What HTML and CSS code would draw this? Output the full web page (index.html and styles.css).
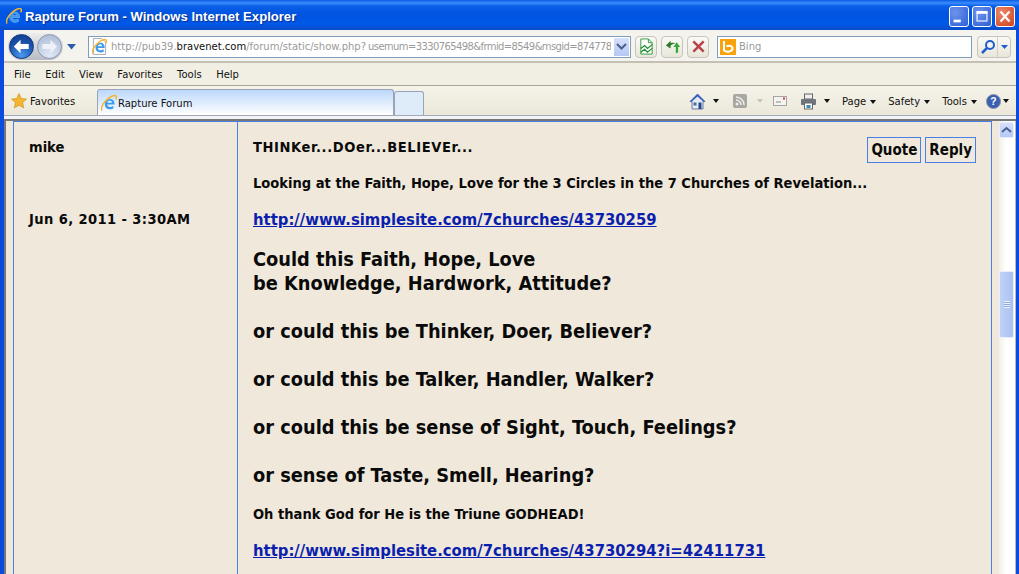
FILE: index.html
```html
<!DOCTYPE html>
<html lang="en">
<head>
<meta charset="utf-8">
<title>Rapture Forum - Windows Internet Explorer</title>
<link rel="stylesheet" href="styles.css">
</head>
<body>
<div class="window">
  <header class="titlebar">
    <svg class="ie ie-title" viewBox="0 0 16 16"><use href="#ie"/></svg>
    <span class="title-text">Rapture Forum - Windows Internet Explorer</span>
    <div class="winbtns">
      <span class="winbtn"><svg viewBox="0 0 20 21"><rect x="4" y="14" width="8" height="3" fill="#fff"/></svg></span>
      <span class="winbtn"><svg viewBox="0 0 20 21"><rect x="4.500" y="5.500" width="11" height="10" fill="none" stroke="#fff" stroke-width="1.200"/><rect x="4" y="4.500" width="12" height="3" fill="#fff"/></svg></span>
      <span class="winbtn winbtn-close"><svg viewBox="0 0 20 21"><path d="M5 5l10 11M15 5L5 16" stroke="#fff" stroke-width="2.400"/></svg></span>
    </div>
  </header>

  <div class="client">
    <div class="navbar">
      <div class="navpill">
        <span class="round round-back"><svg viewBox="0 0 24 24"><path d="M4 12l7-7v4.500h8.500v5H11V19z" fill="#fff"/></svg></span>
        <span class="round round-fwd"><svg viewBox="0 0 24 24"><path d="M20 12l-7-7v4.500H4.500v5H13V19z" fill="#eef2f8"/></svg></span>
      </div>
      <svg class="navdrop" viewBox="0 0 9 6"><path d="M0 0h9L4.500 5.500z" fill="#2a5ea8"/></svg>
      <div class="addr">
        <svg class="addr-ico" viewBox="0 0 16 18"><path d="M1.500.5h9l4 4v13h-13z" fill="#fff" stroke="#a8a8b4"/><g transform="translate(0 1)"><use href="#ie"/></g></svg>
        <span class="addr-url">http://pub39.<b>bravenet.com</b>/forum/static/show.php?<span class="addr-query">usernum=3330765498&amp;frmid=8549&amp;msgid=874778</span></span>
        <span class="addr-drop"><svg viewBox="0 0 11 8"><path d="M1 1l4.500 4.500L10 1" fill="none" stroke="#4a5f8a" stroke-width="2"/></svg></span>
      </div>
      <span class="navbtn"><svg viewBox="0 0 16 18"><path d="M2 1h8l4 4v12H2z" fill="#fff" stroke="#2c9a3a"/><path d="M10 1v4h4" fill="none" stroke="#2c9a3a"/><path d="M2 11l4-3 3 3 5-4M2 15l4-3 3 3 5-4" fill="none" stroke="#1f8a30" stroke-width="1.300"/></svg></span>
      <span class="navbtn"><svg viewBox="0 0 18 18"><path d="M2 8l5-5v2.500c2-.8 4-.5 5 .7-1.500-.2-3.500.3-5 1.800V11z" fill="#2a7a2a"/><path d="M13.500 4.500L17 9.500h-2V15l-2.500 1.500V9.500H10z" fill="#35a83a"/></svg></span>
      <span class="navbtn"><svg viewBox="0 0 18 18"><path d="M3.500 3.500l11 11M14.500 3.500l-11 11" stroke="#b8404a" stroke-width="2.600"/></svg></span>
      <div class="search">
        <span class="bing"><svg viewBox="0 0 16 16"><path d="M4 2v9.500c3 2.200 8.500 1 8.500-2 0-2.800-4-3.500-6-2" fill="none" stroke="#fff" stroke-width="2"/></svg></span>
        <span class="search-text">Bing</span>
      </div>
      <div class="searchbtn">
        <span class="searchbtn-go"><svg viewBox="0 0 16 16"><circle cx="10" cy="6" r="4" fill="none" stroke="#1d5fd0" stroke-width="2"/><path d="M7 9l-5 5" stroke="#1d5fd0" stroke-width="2.500"/></svg></span>
        <span class="searchbtn-drop"><svg viewBox="0 0 7 4"><path d="M0 0h7L3.500 4z" fill="#1d5fd0"/></svg></span>
      </div>
    </div>

    <nav class="menubar">
      <span>File</span><span>Edit</span><span>View</span><span>Favorites</span><span>Tools</span><span>Help</span>
    </nav>

    <div class="tabbar">
      <div class="tabrow">
        <div class="favs">
          <svg class="star" viewBox="0 0 16 16"><path d="M8 .5l2.300 5 5.200.6-3.900 3.500 1.100 5.400L8 12.300 3.300 15l1.100-5.400L.5 6.100l5.200-.6z" fill="#f5b62e" stroke="#c98a1a" stroke-width=".6"/></svg>
          <span>Favorites</span>
        </div>
        <div class="tab tab-active">
          <svg class="ie" viewBox="0 0 16 16"><use href="#ie"/></svg>
          <span>Rapture Forum</span>
        </div>
        <div class="tab tab-new"></div>
        <div class="cmds">
          <span class="cmd cmd-home"><svg viewBox="0 0 17 17"><path d="M8.500 1L1 8.500h2V16h11V8.500h2z" fill="#e4ebf3" stroke="#4a6090" stroke-width=".8"/><path d="M8.500 1L1 8.500h2L8.500 3.500 14 8.500h2z" fill="#2f5fc0"/><rect x="9.500" y="9.500" width="3" height="6.500" fill="#1f4a90"/><rect x="4.500" y="9.500" width="3" height="3" fill="#4a6a9a"/></svg><i class="caret"></i></span>
          <span class="cmd cmd-rss"><svg viewBox="0 0 14 14"><rect width="14" height="14" rx="2" fill="#a9a79f"/><circle cx="4" cy="10" r="1.500" fill="#eee"/><path d="M3 6a5 5 0 0 1 5 5M3 3a8 8 0 0 1 8 8" fill="none" stroke="#eee" stroke-width="1.500"/></svg><i class="caret caret-dim"></i></span>
          <span class="cmd cmd-mail"><svg viewBox="0 0 14 10"><rect x=".5" y=".5" width="13" height="9" fill="#f4f4f2" stroke="#a5a5a5"/><path d="M3 6h5" stroke="#888"/><rect x="10" y="1.500" width="2" height="2" fill="#d33"/></svg></span>
          <span class="cmd cmd-print"><svg viewBox="0 0 17 17"><rect x="4.500" y="1" width="8" height="5" fill="#f0f0f0" stroke="#666"/><rect x="1" y="6" width="15" height="6" rx="1" fill="#6f747c"/><rect x="4.500" y="10" width="8" height="6" fill="#fff" stroke="#666"/><rect x="6.500" y="12" width="4" height="3" fill="#3a8ab0"/></svg><i class="caret"></i></span>
          <span class="cmd-text cmd-page">Page<i class="caret"></i></span>
          <span class="cmd-text cmd-safety">Safety<i class="caret"></i></span>
          <span class="cmd-text cmd-tools">Tools<i class="caret"></i></span>
          <span class="cmd cmd-help"><svg viewBox="0 0 16 16"><circle cx="8" cy="8" r="7.500" fill="#3a5fb0" stroke="#8b93a5"/><text x="8" y="12" text-anchor="middle" font-size="11" font-weight="700" fill="#fff" font-family="Liberation Sans">?</text></svg><i class="caret"></i></span>
        </div>
      </div>
      <div class="tabstrip"></div>
    </div>

    <div class="viewport">
      <main class="page">
        <div class="post">
          <aside class="author">
            <div class="name">mike</div>
            <div class="date">Jun 6, 2011 - 3:30AM</div>
          </aside>
          <article class="body">
            <div class="actions"><a class="act">Quote</a><a class="act">Reply</a></div>
            <p class="subject">THINKer...DOer...BELIEVEr...</p>
            <p class="lead">Looking at the Faith, Hope, Love for the 3 Circles in the 7 Churches of Revelation...</p>
            <p class="link"><a href="#">http://www.simplesite.com/7churches/43730259</a></p>
            <p class="big">Could this Faith, Hope, Love<br>be Knowledge, Hardwork, Attitude?<br><br>or could this be Thinker, Doer, Believer?<br><br>or could this be Talker, Handler, Walker?<br><br>or could this be sense of Sight, Touch, Feelings?<br><br>or sense of Taste, Smell, Hearing?</p>
            <p class="lead">Oh thank God for He is the Triune GODHEAD!</p>
            <p class="link"><a href="#">http://www.simplesite.com/7churches/43730294?i=42411731</a></p>
          </article>
        </div>
      </main>
      <div class="scrollbar">
        <span class="sb-btn"><svg viewBox="0 0 11 8"><path d="M1 6l4.500-4L10 6" fill="none" stroke="#4a6090" stroke-width="2"/></svg></span>
        <span class="sb-thumb"><i></i></span>
      </div>
    </div>
  </div>
</div>
<svg class="defs" width="0" height="0">
  <defs>
    <g id="ie">
      <path fill-rule="evenodd" fill="#3d9bec" stroke="#eaf4ff" stroke-width=".5" paint-order="stroke" d="M13.500 9.500H6.200c.2 1.600 1.400 2.500 3 2.500 1.100 0 2-.4 2.800-1l.8 2c-1 .8-2.300 1.300-3.800 1.300-3 0-5.200-2-5.200-5 0-3 2.200-5.200 5.200-5.200 3 0 4.700 2.200 4.500 5.400zM6.300 7.700h4.600c-.1-1.300-1-2.200-2.200-2.200s-2.200.9-2.400 2.200z"/>
      <path d="M1 15.500c-1.500-2 .5-6.500 4-10C8.800 1.700 13.500-.5 15 1c.8.8.5 2-.3 3.300" fill="none" stroke="#f4b52e" stroke-width="1.500"/>
    </g>
  </defs>
</svg>
</body>
</html>
```

FILE: styles.css
```css
* { box-sizing: border-box; }
html, body { margin: 0; height: 100%; overflow: hidden; }
.defs { position: absolute; }
.window {
  width: 1019px; height: 574px; display: flex; flex-direction: column;
  background: #0b4be0; overflow: hidden;
  font-family: "DejaVu Sans", sans-serif;
}
.titlebar {
  height: 30px; flex: none; display: flex; align-items: center; padding: 2px 4px 0 6px;
  background: linear-gradient(#0a5ae0 0, #3a8dff 3px, #0a5fe8 6px, #0054e0 14px, #0058e8 24px, #0a4cc8 30px);
}
.ie { width: 16px; height: 16px; flex: none; }
.title-text {
  font: 700 13.100px "Liberation Sans", sans-serif; color: #fff; margin-left: 3px; flex: 1;
  text-shadow: 1px 1px 1px #0a2f90;
}
.winbtns { display: flex; gap: 3px; margin-top: 1px; }
.winbtn {
  width: 20px; height: 21px; border: 1px solid #fff; border-radius: 3px;
  background: radial-gradient(circle at 30% 30%, #6d93ea, #2c5ed8);
}
.winbtn svg { display: block; width: 100%; height: 100%; }
.winbtn-close { background: radial-gradient(circle at 30% 30%, #ea8a6a, #d2401c); }
.client {
  flex: 1; min-height: 0; margin: 0 3px 0 4px; display: flex; flex-direction: column; background: #ece9d8;
}
.navbar {
  height: 33px; flex: none; display: flex; align-items: center; background: #f4f3ee;
  border-bottom: 2px solid #c4c1b4; padding: 2px 0 0 4px;
}
.navpill {
  display: flex; align-items: center; gap: 3px; width: 55px; height: 27px; border-radius: 14px;
  background: linear-gradient(#ececec, #b9bcc4); padding: 1px;
}
.round { width: 25px; height: 25px; border-radius: 50%; flex: none; }
.round svg { display: block; width: 100%; height: 100%; }
.round-back { background: radial-gradient(circle at 50% 90%, #4a9af0, #1a4fa8 60%, #0f3a88); border: 1px solid #123a80; }
.round-fwd { background: radial-gradient(circle at 50% 90%, #dfe8f6, #aab8d0); border: 1px solid #8d99b0; }
.navdrop { width: 9px; height: 6px; margin-left: 4px; flex: none; }
.addr {
  width: 543px; height: 22px; display: flex; align-items: center; background: #fff;
  border: 1px solid #7f9db9; margin-left: 12px;
}
.addr-ico { width: 15px; height: 17px; margin: 0 4px 0 3px; flex: none; }
.addr-url {
  flex: 1; min-width: 0; overflow: hidden; white-space: nowrap; margin-right: 3px;
  font: 10px "DejaVu Sans", sans-serif; color: #9a9a9a;
}
.addr-url b { font-weight: 400; color: #111; }
.addr-query { letter-spacing: -.6px; padding-left: 2px; }
.addr-drop {
  width: 15px; height: 18px; flex: none; display: flex; align-items: center; justify-content: center;
  background: linear-gradient(#d6e0fb, #b5c8f5); margin-right: 1px;
}
.addr-drop svg { width: 11px; height: 8px; }
.navbtn {
  width: 22px; height: 22px; border: 1px solid #c6c5bb; border-radius: 4px; margin-left: 4px; flex: none;
  background: linear-gradient(#fafaf6, #e8e6da); display: flex; align-items: center; justify-content: center;
}
.navbtn svg { width: 17px; height: 17px; }
.search {
  width: 255px; height: 22px; margin-left: 8px; display: flex; align-items: center; background: #fff;
  border: 1px solid #7f9db9; padding-left: 2px;
}
.bing { width: 16px; height: 16px; background: #f8a30e; flex: none; display: block; }
.bing svg { display: block; width: 100%; height: 100%; }
.search-text { font: 10px "DejaVu Sans", sans-serif; color: #9a9a9a; margin-left: 3px; }
.searchbtn {
  width: 34px; height: 22px; margin-left: 5px; display: flex; border: 1px solid #c6c5bb; border-radius: 4px;
  background: linear-gradient(#fafaf6, #e8e6da);
}
.searchbtn-go { width: 20px; display: flex; align-items: center; justify-content: center; border-right: 1px solid #d0cfc4; }
.searchbtn-go svg { width: 16px; height: 16px; }
.searchbtn-drop { flex: 1; display: flex; align-items: center; justify-content: center; }
.searchbtn-drop svg { width: 7px; height: 4px; }
.menubar {
  height: 23px; flex: none; display: flex; align-items: center; gap: 14.500px; padding: 1px 0 0 10px;
  background: #f1efe4; border-bottom: 1px solid #a8a69c;
  font: 10px "DejaVu Sans", sans-serif; color: #111;
}
.tabbar {
  height: 35px; flex: none; display: flex; flex-direction: column;
  border-bottom: 2px solid #77777a; background: #f2f4f8;
}
.tabrow {
  height: 30px; flex: none; display: flex; align-items: flex-end;
  background: linear-gradient(#f5f3ea, #ebe8da); border-bottom: 1px solid #a3a9b8;
}
.tabstrip { flex: 1; }
.favs {
  width: 93px; height: 29px; display: flex; align-items: center; padding: 1px 0 0 7px; gap: 3px;
  font: 10px "DejaVu Sans", sans-serif; color: #111;
}
.star { width: 16px; height: 16px; flex: none; }
.tab { height: 26px; border: 1px solid #9aa4b8; border-bottom: 0; border-radius: 3px 3px 0 0; }
.tab-active {
  width: 297px; display: flex; align-items: center; padding: 1px 0 0 3px; gap: 1px;
  background: linear-gradient(#bcd8fa, #fff);
  font: 10px "DejaVu Sans", sans-serif; color: #111;
}
.tab-new { width: 30px; height: 24px; background: #deebf9; }
.cmds {
  flex: 1; display: flex; align-items: center; height: 29px; padding: 1px 0 0 265px;
  font: 10px "DejaVu Sans", sans-serif; color: #111; white-space: nowrap;
}
.cmd { display: flex; align-items: center; }
.cmd svg { flex: none; }
.cmd-home svg { width: 17px; height: 17px; }
.cmd-rss { margin-left: 14px; }
.cmd-rss svg { width: 14px; height: 14px; }
.cmd-mail { margin-left: 10px; }
.cmd-mail svg { width: 14px; height: 10px; }
.cmd-print { margin-left: 13px; }
.cmd-print svg { width: 17px; height: 17px; }
.cmd-help { margin-left: 9px; }
.cmd-help svg { width: 15px; height: 15px; }
.caret {
  display: inline-block; width: 0; height: 0; margin-left: 7px; vertical-align: middle;
  border-left: 3px solid transparent; border-right: 3px solid transparent; border-top: 4px solid #111;
}
.cmd-rss .caret { margin-left: 10px; }
.caret-dim { border-top-color: #c8c6bc; }
.cmd-help .caret { margin-left: 2px; }
.cmd-page { margin-left: 12px; }
.cmd-safety { margin-left: 12px; }
.cmd-tools { margin-left: 12px; }
.cmd-text .caret { margin-left: 4px; }
.viewport { flex: 1; min-height: 0; display: flex; background: #fff; }
.page {
  flex: 1; min-width: 0; background: #f0e8da; border-left: 2px solid #77777a; padding-left: 7px; overflow: hidden;
  display: flex;
}
.post {
  width: 979px; flex: none; display: flex; background: #f0e8da;
  border: 1px solid #4a7fe8; border-bottom: 0;
  font: 700 14.550px/17px "DejaVu Sans Condensed", "DejaVu Sans", sans-serif; color: #0a0a0a;
}
.author { width: 224px; flex: none; border-right: 1px solid #4a7fe8; padding: 16px 0 0 15px; }
.name { height: 72px; }
.date { letter-spacing: .4px; }
.body { flex: 1; min-width: 0; padding: 16px 15px 0 15px; }
.actions { float: right; display: flex; gap: 4px; margin-top: -1px; }
.act { border: 1px solid #4a7fe8; padding: 2px 3px; height: 26px; font-size: 15px; line-height: 20px; }
.body p { margin: 0; }
.subject { height: 36px; letter-spacing: .6px; }
.lead { height: 36px; }
.link { height: 38px; font-size: 16.500px; line-height: 20px; }
.link a { color: #0b1fae; text-decoration: underline; }
.big { font-size: 19.800px; line-height: 24px; }
.body .big { margin-bottom: 17px; }
.scrollbar {
  width: 17px; flex: none; background: linear-gradient(90deg, #f2f0e8, #fff 45%); position: relative;
  border-right: 1px solid #bdbdb6;
}
.sb-btn {
  display: flex; align-items: center; justify-content: center; width: 15px; height: 16px; margin-top: 1px;
  background: linear-gradient(#d6e0fb, #b5c8f5); border-radius: 2px; border: 1px solid #e8eefc;
}
.sb-btn svg { width: 11px; height: 8px; }
.sb-thumb {
  position: absolute; left: 0; top: 150px; width: 15px; height: 67px; border-radius: 2px;
  background: linear-gradient(90deg, #c0d2f8, #aac0f0); border: 1px solid #e8eefc;
  display: flex; align-items: center; justify-content: center;
}
.sb-thumb i { width: 6px; height: 7px; background: repeating-linear-gradient(#eef3ff 0 1px, #8fa8dc 1px 2px); }
```
